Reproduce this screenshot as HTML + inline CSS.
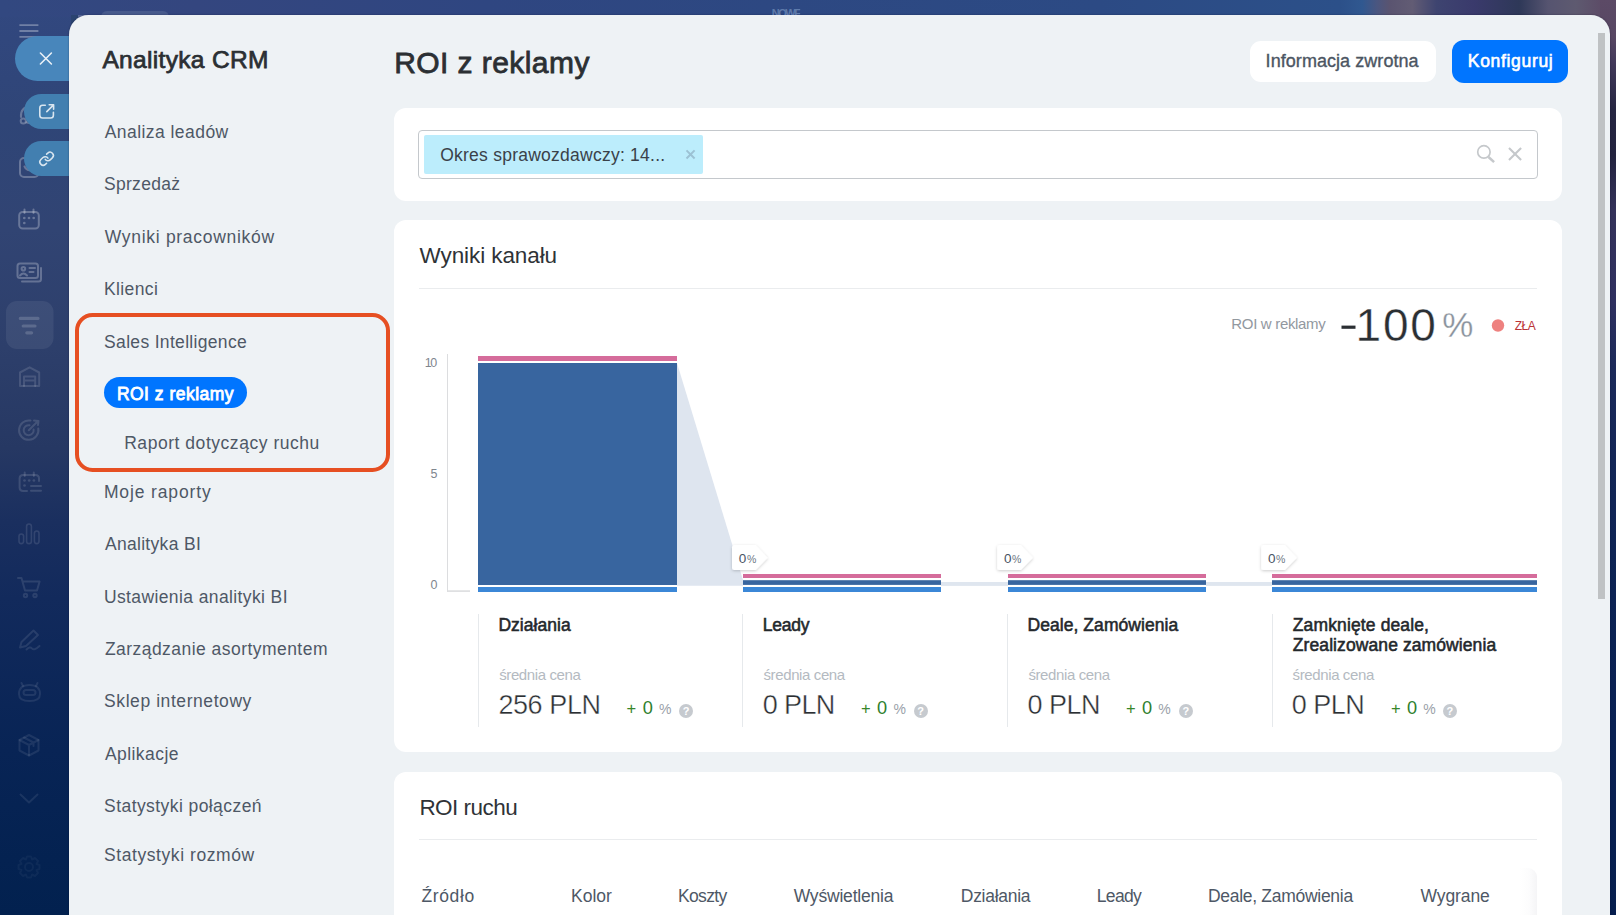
<!DOCTYPE html>
<html lang="pl">
<head>
<meta charset="utf-8">
<title>ROI z reklamy</title>
<style>
*{box-sizing:border-box;margin:0;padding:0}
html,body{width:1616px;height:915px;overflow:hidden}
body{font-family:"Liberation Sans",sans-serif;position:relative;
 background:linear-gradient(180deg,#324880 0%,#2f4577 13%,#314473 25%,#2d3f6b 38%,#263863 49%,#1a2f5f 57%,#122a5c 65.5%,#082455 82%,#02214f 100%);}
.abs{position:absolute}
.t{position:absolute;white-space:nowrap;line-height:1;font-family:"Liberation Sans",sans-serif}
/* top strip photo-like background */
#topbg{left:0;top:0;width:1616px;height:17px;
 background:linear-gradient(90deg,#324880 0%,#34467f 12%,#2f4681 30%,#2d4882 48%,#2c4a84 68%,#2c5089 82.9%,#305890 84.3%,#4a5680 85.2%,#5a5470 86%,#625c74 87.4%,#3e4470 88.9%,#3a3a6c 91.2%,#2e3858 94%,#565470 95.8%,#5e5a70 97.5%,#5c4a66 99.3%,#5c4a66 100%);}
#rightbg{left:1600px;top:0;width:16px;height:915px;
 background:linear-gradient(180deg,#5c4a66 0%,#584763 4%,#42395a 7%,#262642 12%,#23233f 17%,#34325a 23%,#2f3060 33%,#1c2a5a 40%,#132657 50%,#0c2354 65%,#092053 80%,#061e4e 100%);}
#panel{left:69px;top:14.9px;width:1540.8px;height:920px;background:#eef2f5;border-radius:19.5px 19px 0 0;box-shadow:0 0 2px rgba(0,0,30,.4)}
#corner{left:71px;top:14.8px;width:7px;height:9px;background:#2b4470}
#corner2{left:78px;top:14.8px;width:9px;height:5px;background:#5a6a9a}
#tab{left:100.5px;top:10.8px;width:68.3px;height:10px;border-radius:6px 6px 0 0;background:#475a8c}
.pill{background:#4886bb;border-radius:23px 0 0 23px}
.card{background:#fff;border-radius:12px}
.hr{height:1px;background:#eaecee}
.vr{width:1px;background:#e6e9ec}
.q{width:14.4px;height:14.4px;border-radius:50%;background:#c6cacf;color:#fff;font-size:11px;font-weight:700;line-height:14.8px;text-align:center}
</style>
</head>
<body>
<div class="abs" id="topbg"></div>
<div class="abs" id="rightbg"></div>
<div class="abs" id="tab"></div>
<div class="abs" id="corner"></div>
<div class="abs" id="corner2"></div>

<!-- sidebar icons -->
<svg class="abs" style="left:0;top:0" width="69" height="915" viewBox="0 0 69 915" fill="none" stroke-linecap="round" stroke-linejoin="round">
<g stroke="#fff" stroke-opacity=".31" stroke-width="1.8" stroke-linecap="butt"><path d="M19.4 25.1H38.4M19.4 31H38.4M19.4 36.9H38.4"/></g>
<g stroke="#fff" stroke-opacity=".27" stroke-width="2"><circle cx="23.3" cy="121" r="2.6"/><path d="M21 117C20.5 111 24 107 30 106"/><path d="M26.3 122.3Q28.5 123.2 31 122.8"/></g>
<g stroke="#fff" stroke-opacity=".27" stroke-width="2"><rect x="20" y="158" width="18.5" height="19" rx="4"/><path d="M24.5 166.5Q26 169.8 30 170.3"/></g>
<g stroke="#fff" stroke-opacity=".27" stroke-width="2"><rect x="19.2" y="212" width="19.6" height="16.5" rx="3.5"/><path d="M24.5 209.5V213M33.5 209.5V213"/></g>
<g fill="#fff" fill-opacity=".27" stroke="none"><circle cx="24.3" cy="218" r="1.35"/><circle cx="29" cy="218" r="1.35"/><circle cx="33.7" cy="218" r="1.35"/><circle cx="24.3" cy="223" r="1.35"/></g>
<g stroke="#fff" stroke-opacity=".26" stroke-width="2"><rect x="17.5" y="263.5" width="20.5" height="14.5" rx="2.5"/><path d="M41 268V279Q41 281.5 38.5 281.5H22"/><circle cx="23.4" cy="268.7" r="1.8"/><path d="M20 275.5Q23.4 271.5 27 275.5"/><path d="M29.5 268H35M29.5 272H33.5"/></g>
<rect x="6" y="301" width="47.5" height="48" rx="11" fill="#fff" fill-opacity=".07" stroke="none"/>
<g stroke="#fff" stroke-opacity=".17" stroke-width="3.2"><path d="M20.3 318.4H38M23.2 326H35M26.8 332.8H31.6"/></g>
<g stroke="#fff" stroke-opacity=".135" stroke-width="2"><path d="M20 386V372.5L29.6 367.3L39.2 372.5V386Z"/><path d="M24 386V376.5H35.2V386M24 380.5H35.2"/></g>
<g stroke="#fff" stroke-opacity=".135" stroke-width="2"><path d="M38.3 428.5A9.7 9.7 0 1 1 30.5 420.6"/><path d="M33.6 429.5A5 5 0 1 1 29.5 425.3"/><path d="M28.8 430.2L36.5 422.5M34 420.5L38.5 421L38 425"/></g>
<g stroke="#fff" stroke-opacity=".135" stroke-width="2"><path d="M27 491H23Q19.6 491 19.6 487.6V478.5Q19.6 475 23 475H35.5Q39 475 39 478.5V481"/><path d="M24.7 472.5V476M33.8 472.5V476"/><path d="M31 486H41M31 490.8H41"/></g>
<g fill="#fff" fill-opacity=".135" stroke="none"><circle cx="24.5" cy="480.5" r="1.35"/><circle cx="29.2" cy="480.5" r="1.35"/><circle cx="33.9" cy="480.5" r="1.35"/><circle cx="24.5" cy="485.5" r="1.35"/></g>
<g stroke="#fff" stroke-opacity=".115" stroke-width="1.6"><rect x="19" y="534" width="4.6" height="9.6" rx="2.3"/><rect x="26.6" y="524" width="4.8" height="19.6" rx="2.4"/><rect x="34.4" y="531" width="4.6" height="12.6" rx="2.3"/></g>
<g stroke="#fff" stroke-opacity=".11" stroke-width="2"><path d="M18 578H21.5L25 590.5H37L39.6 581.5H23"/><circle cx="25.5" cy="595.5" r="1.7"/><circle cx="35" cy="595.5" r="1.7"/></g>
<g stroke="#fff" stroke-opacity=".10" stroke-width="2"><path d="M20 647.5L21.5 642L33.5 630.5L38 635L26 646Z"/><path d="M26.5 649.5Q30 646 32 648.5T39.5 646"/></g>
<g stroke="#fff" stroke-opacity=".09" stroke-width="2"><path d="M19 694Q19 685 29.5 685T40 694Q40 701 29.5 701T19 694Z"/><rect x="23.5" y="690" width="12" height="5" rx="2.5"/><path d="M23 686L21.5 683M36 686L37.5 683"/></g>
<g stroke="#fff" stroke-opacity=".085" stroke-width="2"><path d="M29 735L38.5 740V750.5L29 755.5L19.5 750.5V740Z"/><path d="M19.5 740L29 745L38.5 740M29 745V755.5M24 737.5L33.5 742.5V746"/></g>
<g stroke="#fff" stroke-opacity=".085" stroke-width="2"><path d="M20.5 794.5L29 802.5L37.5 794.5"/></g>
<g stroke="#fff" stroke-opacity=".045" stroke-width="2"><circle cx="29" cy="867" r="4"/><path d="M27 856.5H31L32 859.5L35 858L38 861L36.5 864L39.5 865V869L36.5 870L38 873L35 876L32 874.5L31 877.5H27L26 874.5L23 876L20 873L21.5 870L18.5 869V865L21.5 864L20 861L23 858L26 859.5Z"/></g>
</svg>

<!-- slider labels -->
<div class="abs pill" style="left:15.4px;top:36px;width:60px;height:44.7px"></div>
<div class="abs pill" style="left:24.4px;top:94px;width:50px;height:34.8px;border-radius:17.4px 0 0 17.4px;background:#427fb0"></div>
<div class="abs pill" style="left:24.4px;top:141px;width:50px;height:34.6px;border-radius:17.3px 0 0 17.3px;background:#427fb0"></div>
<svg class="abs" style="left:0;top:0" width="69" height="200" viewBox="0 0 69 200" fill="none" stroke="#fff" stroke-linecap="round" stroke-linejoin="round">
<path d="M40.4 53L51.4 64M51.4 53L40.4 64" stroke-width="1.6" stroke-opacity=".88"/>
<g stroke-width="1.6" stroke-opacity=".8"><path d="M45.3 105.3H42.6Q39.8 105.3 39.8 108.1V115.2Q39.8 118 42.6 118H50.6Q53.4 118 53.4 115.2V112.2"/><path d="M46.8 111.6L53.3 105.1M49.2 104.8H53.6V109.2"/></g>
<g stroke-width="2.3" stroke-opacity=".8" transform="translate(46.6 158.7) rotate(2) scale(.665) translate(-12 -12)"><path d="M10 13a5 5 0 0 0 7.54.54l3-3a5 5 0 0 0-7.07-7.07l-1.72 1.71"/><path d="M14 11a5 5 0 0 0-7.54-.54l-3 3a5 5 0 0 0 7.07 7.07l1.71-1.71"/></g>
</svg>

<div class="abs" id="panel"></div>

<!-- left menu -->
<div class="abs" style="left:74.9px;top:312.9px;width:315px;height:159.2px;border:4.5px solid #e64f22;border-radius:17.5px"></div>
<div class="abs" style="left:104px;top:377px;width:143px;height:31px;border-radius:16px;background:#0075ff"></div>

<!-- header buttons -->
<div class="abs" style="left:1250px;top:41px;width:186px;height:41px;border-radius:11px;background:#fff"></div>
<div class="abs" style="left:1452px;top:40px;width:116px;height:43px;border-radius:12px;background:#0075ff"></div>

<!-- scrollbar -->
<div class="abs" style="left:1598px;top:33px;width:7px;height:565.8px;background:#bfc2c4"></div>

<!-- filter card -->
<div class="abs card" style="left:394px;top:108px;width:1168px;height:93px"></div>
<div class="abs" style="left:418px;top:130px;width:1120px;height:49px;border:1px solid #c4c8cc;border-radius:4px;background:#fff"></div>
<div class="abs" style="left:424px;top:135px;width:279px;height:38.5px;border-radius:2px;background:#bcedfc"></div>
<svg class="abs" style="left:680px;top:144px" width="22" height="22" viewBox="0 0 22 22" fill="none" stroke="#9cc2d4" stroke-width="2" stroke-linecap="butt"><path d="M6.5 6.4l8.1 8.1M14.6 6.4l-8.1 8.1"/></svg>
<svg class="abs" style="left:1470px;top:140px" width="60" height="30" viewBox="0 0 60 30" fill="none" stroke="#c5c8cb" stroke-linecap="butt"><circle cx="13.9" cy="11.9" r="6.2" stroke-width="1.7"/><path d="M18.5 17L24.1 22.1" stroke-width="2.5"/><path d="M39 8l12.1 12.1M51.1 8l-12.1 12.1" stroke-width="2.1"/></svg>

<!-- chart card -->
<div class="abs card" style="left:394px;top:220px;width:1168px;height:532px"></div>
<div class="abs hr" style="left:419px;top:288px;width:1118px"></div>
<svg class="abs" style="left:394px;top:220px" width="1168" height="532" viewBox="394 220 1168 532" shape-rendering="auto">
<rect x="447" y="354" width="1" height="237.8" fill="#dcdddf"/><rect x="447" y="590.3" width="23" height="1.6" fill="#dcdddf"/>
<path d="M677 363L743 580V585.8H677Z" fill="#dee5ef"/>
<rect x="941" y="582" width="67" height="3.9" fill="#dfe6ef"/>
<rect x="1206" y="582" width="66" height="3.9" fill="#dfe6ef"/>
<rect x="478" y="356" width="199" height="5" fill="#d56c9b"/>
<rect x="478" y="363" width="199" height="222" fill="#38659f"/>
<rect x="478" y="587" width="199" height="5" fill="#3b87d7"/>
<rect x="743" y="574" width="198" height="4" fill="#d56c9b"/>
<rect x="743" y="580.2" width="198" height="4.7" fill="#38659f"/>
<rect x="743" y="587" width="198" height="5" fill="#3b87d7"/>
<rect x="1008" y="574" width="198" height="4" fill="#d56c9b"/>
<rect x="1008" y="580.2" width="198" height="4.7" fill="#38659f"/>
<rect x="1008" y="587" width="198" height="5" fill="#3b87d7"/>
<rect x="1272" y="574" width="265" height="4" fill="#d56c9b"/>
<rect x="1272" y="580.2" width="265" height="4.7" fill="#38659f"/>
<rect x="1272" y="587" width="265" height="5" fill="#3b87d7"/>
<defs><filter id="sh" x="-30%" y="-30%" width="160%" height="170%"><feDropShadow dx="0" dy="1" stdDeviation="1.6" flood-color="#000" flood-opacity=".2"/></filter></defs>
<path d="M734.5 545H755.6L767.7 557.8L755.6 570H734.5Q732 570 732 567.5V547.5Q732 545 734.5 545Z" fill="#fff" filter="url(#sh)"/>
<path d="M999.7 545H1020.8000000000001L1032.9 557.8L1020.8000000000001 570H999.7Q997.2 570 997.2 567.5V547.5Q997.2 545 999.7 545Z" fill="#fff" filter="url(#sh)"/>
<path d="M1263.7 545H1284.8L1296.9 557.8L1284.8 570H1263.7Q1261.2 570 1261.2 567.5V547.5Q1261.2 545 1263.7 545Z" fill="#fff" filter="url(#sh)"/>
<rect x="1341.5" y="325.6" width="14" height="3.2" fill="#2b2f33"/>
<circle cx="1498" cy="325.5" r="6.2" fill="#ee817f"/>
</svg>
<div class="abs vr" style="left:478px;top:614px;height:113px"></div>
<div class="abs vr" style="left:742px;top:614px;height:113px"></div>
<div class="abs vr" style="left:1007px;top:614px;height:113px"></div>
<div class="abs vr" style="left:1272px;top:614px;height:113px"></div>
<div class="abs q" style="left:678.8px;top:703.6px">?</div>
<div class="abs q" style="left:913.5px;top:703.6px">?</div>
<div class="abs q" style="left:1178.7px;top:703.6px">?</div>
<div class="abs q" style="left:1442.6px;top:703.6px">?</div>

<!-- second card -->
<div class="abs card" style="left:394px;top:772px;width:1168px;height:200px"></div>
<div class="abs hr" style="left:419px;top:838.5px;width:1118px"></div>
<div class="abs" style="left:1519px;top:868px;width:18px;height:47px;background:linear-gradient(90deg,rgba(235,235,238,0) 0%,rgba(232,232,236,.12) 55%,rgba(225,225,230,.34) 100%);border-radius:0 9px 0 0"></div>

<span class="t" style="left:102.40px;top:48.00px;font-size:24.5px;color:#2b2f33;letter-spacing:0.333px;-webkit-text-stroke:0.75px #2b2f33;">Analityka CRM</span>
<span class="t" style="left:104.70px;top:124.00px;font-size:17.5px;color:#4e5866;letter-spacing:0.448px;">Analiza leadów</span>
<span class="t" style="left:104.00px;top:176.00px;font-size:17.5px;color:#4e5866;letter-spacing:0.288px;">Sprzedaż</span>
<span class="t" style="left:104.70px;top:229.00px;font-size:17.5px;color:#4e5866;letter-spacing:0.709px;">Wyniki pracowników</span>
<span class="t" style="left:103.90px;top:281.00px;font-size:17.5px;color:#4e5866;letter-spacing:0.406px;">Klienci</span>
<span class="t" style="left:104.10px;top:334.00px;font-size:17.5px;color:#4e5866;letter-spacing:0.321px;">Sales Intelligence</span>
<span class="t" style="left:116.90px;top:385.50px;font-size:17.5px;color:#ffffff;letter-spacing:0.484px;-webkit-text-stroke:0.8px #fff;">ROI z reklamy</span>
<span class="t" style="left:124.20px;top:435.00px;font-size:17.5px;color:#4e5866;letter-spacing:0.538px;">Raport dotyczący ruchu</span>
<span class="t" style="left:103.90px;top:484.00px;font-size:17.5px;color:#4e5866;letter-spacing:0.872px;">Moje raporty</span>
<span class="t" style="left:104.90px;top:536.00px;font-size:17.5px;color:#4e5866;letter-spacing:0.314px;">Analityka BI</span>
<span class="t" style="left:103.90px;top:589.00px;font-size:17.5px;color:#4e5866;letter-spacing:0.390px;">Ustawienia analityki BI</span>
<span class="t" style="left:104.90px;top:641.00px;font-size:17.5px;color:#4e5866;letter-spacing:0.458px;">Zarządzanie asortymentem</span>
<span class="t" style="left:104.10px;top:693.00px;font-size:17.5px;color:#4e5866;letter-spacing:0.570px;">Sklep internetowy</span>
<span class="t" style="left:104.90px;top:746.00px;font-size:17.5px;color:#4e5866;letter-spacing:0.450px;">Aplikacje</span>
<span class="t" style="left:104.10px;top:798.00px;font-size:17.5px;color:#4e5866;letter-spacing:0.424px;">Statystyki połączeń</span>
<span class="t" style="left:104.10px;top:847.00px;font-size:17.5px;color:#4e5866;letter-spacing:0.565px;">Statystyki rozmów</span>
<span class="t" style="left:394.20px;top:48.40px;font-size:30px;color:#2b2f33;letter-spacing:0.432px;-webkit-text-stroke:0.8px #2b2f33;">ROI z reklamy</span>
<span class="t" style="left:1265.60px;top:52.00px;font-size:18px;color:#4b5562;letter-spacing:0.056px;-webkit-text-stroke:0.35px #4b5562;">Informacja zwrotna</span>
<span class="t" style="left:1467.80px;top:52.80px;font-size:17.5px;color:#ffffff;letter-spacing:0.676px;-webkit-text-stroke:0.6px #fff;">Konfiguruj</span>
<span class="t" style="left:440.20px;top:147.20px;font-size:17.5px;color:#3a4149;letter-spacing:0.245px;">Okres sprawozdawczy: 14...</span>
<span class="t" style="left:419.60px;top:244.90px;font-size:22.5px;color:#2f3337;letter-spacing:-0.091px;">Wyniki kanału</span>
<span class="t" style="left:1231.30px;top:316.10px;font-size:15px;color:#92989f;letter-spacing:-0.320px;">ROI w reklamy</span>
<span class="t" style="left:1355.60px;top:301.70px;font-size:46px;color:#2b2f33;letter-spacing:1.717px;-webkit-text-stroke:0.35px #fff;">100</span>
<span class="t" style="left:1442.20px;top:307.00px;font-size:35px;color:#8a929c;letter-spacing:0.000px;-webkit-text-stroke:0.3px #fff;">%</span>
<span class="t" style="left:1514.80px;top:319.80px;font-size:12px;color:#bb3336;letter-spacing:-0.502px;">ZŁA</span>
<span class="t" style="left:424.80px;top:356.90px;font-size:12.5px;color:#7f868e;letter-spacing:-1.452px;">10</span>
<span class="t" style="left:430.60px;top:468.10px;font-size:12.5px;color:#7f868e;letter-spacing:0.000px;">5</span>
<span class="t" style="left:430.60px;top:579.00px;font-size:12.5px;color:#7f868e;letter-spacing:0.000px;">0</span>
<span class="t" style="left:498.40px;top:617.00px;font-size:17.5px;color:#24282c;letter-spacing:0.044px;-webkit-text-stroke:0.55px #24282c;">Działania</span>
<span class="t" style="left:762.70px;top:617.00px;font-size:17.5px;color:#24282c;letter-spacing:-0.208px;-webkit-text-stroke:0.55px #24282c;">Leady</span>
<span class="t" style="left:1027.60px;top:617.00px;font-size:17.5px;color:#24282c;letter-spacing:0.046px;-webkit-text-stroke:0.55px #24282c;">Deale, Zamówienia</span>
<span class="t" style="left:1292.80px;top:617.00px;font-size:17.5px;color:#24282c;letter-spacing:0.128px;-webkit-text-stroke:0.55px #24282c;">Zamknięte deale,</span>
<span class="t" style="left:1292.80px;top:637.00px;font-size:17.5px;color:#24282c;letter-spacing:0.090px;-webkit-text-stroke:0.55px #24282c;">Zrealizowane zamówienia</span>
<span class="t" style="left:499.20px;top:667.00px;font-size:15px;color:#b4bac1;letter-spacing:-0.386px;">średnia cena</span>
<span class="t" style="left:498.40px;top:691.80px;font-size:27px;color:#2b2f33;letter-spacing:-0.412px;-webkit-text-stroke:0.4px #fff;">256 PLN</span>
<span class="t" style="left:626.60px;top:699.60px;font-size:16.5px;color:#37862a;letter-spacing:0.000px;">+</span>
<span class="t" style="left:642.80px;top:698.90px;font-size:18.2px;color:#2f7f2e;letter-spacing:0.000px;">0</span>
<span class="t" style="left:659.00px;top:701.60px;font-size:14px;color:#9aa1a9;letter-spacing:0.000px;">%</span>
<span class="t" style="left:763.50px;top:667.00px;font-size:15px;color:#b4bac1;letter-spacing:-0.386px;">średnia cena</span>
<span class="t" style="left:762.70px;top:691.80px;font-size:27px;color:#2b2f33;letter-spacing:-0.611px;-webkit-text-stroke:0.4px #fff;">0 PLN</span>
<span class="t" style="left:860.90px;top:699.60px;font-size:16.5px;color:#37862a;letter-spacing:0.000px;">+</span>
<span class="t" style="left:877.10px;top:698.90px;font-size:18.2px;color:#2f7f2e;letter-spacing:0.000px;">0</span>
<span class="t" style="left:893.40px;top:701.60px;font-size:14px;color:#9aa1a9;letter-spacing:0.000px;">%</span>
<span class="t" style="left:1028.40px;top:667.00px;font-size:15px;color:#b4bac1;letter-spacing:-0.386px;">średnia cena</span>
<span class="t" style="left:1027.60px;top:691.80px;font-size:27px;color:#2b2f33;letter-spacing:-0.511px;-webkit-text-stroke:0.4px #fff;">0 PLN</span>
<span class="t" style="left:1125.90px;top:699.60px;font-size:16.5px;color:#37862a;letter-spacing:0.000px;">+</span>
<span class="t" style="left:1142.10px;top:698.90px;font-size:18.2px;color:#2f7f2e;letter-spacing:0.000px;">0</span>
<span class="t" style="left:1158.20px;top:701.60px;font-size:14px;color:#9aa1a9;letter-spacing:0.000px;">%</span>
<span class="t" style="left:1292.60px;top:667.00px;font-size:15px;color:#b4bac1;letter-spacing:-0.386px;">średnia cena</span>
<span class="t" style="left:1291.80px;top:691.80px;font-size:27px;color:#2b2f33;letter-spacing:-0.511px;-webkit-text-stroke:0.4px #fff;">0 PLN</span>
<span class="t" style="left:1390.90px;top:699.60px;font-size:16.5px;color:#37862a;letter-spacing:0.000px;">+</span>
<span class="t" style="left:1407.10px;top:698.90px;font-size:18.2px;color:#2f7f2e;letter-spacing:0.000px;">0</span>
<span class="t" style="left:1423.20px;top:701.60px;font-size:14px;color:#9aa1a9;letter-spacing:0.000px;">%</span>
<span class="t" style="left:419.40px;top:796.80px;font-size:22.5px;color:#2f3337;letter-spacing:-0.528px;">ROI ruchu</span>
<span class="t" style="left:421.40px;top:887.50px;font-size:17.5px;color:#4e5866;letter-spacing:0.646px;">Źródło</span>
<span class="t" style="left:571.00px;top:887.50px;font-size:17.5px;color:#4e5866;letter-spacing:-0.006px;">Kolor</span>
<span class="t" style="left:678.10px;top:887.50px;font-size:17.5px;color:#4e5866;letter-spacing:-0.693px;">Koszty</span>
<span class="t" style="left:793.70px;top:887.50px;font-size:17.5px;color:#4e5866;letter-spacing:-0.193px;">Wyświetlenia</span>
<span class="t" style="left:960.80px;top:887.50px;font-size:17.5px;color:#4e5866;letter-spacing:-0.281px;">Działania</span>
<span class="t" style="left:1096.80px;top:887.50px;font-size:17.5px;color:#4e5866;letter-spacing:-0.683px;">Leady</span>
<span class="t" style="left:1207.90px;top:887.50px;font-size:17.5px;color:#4e5866;letter-spacing:-0.285px;">Deale, Zamówienia</span>
<span class="t" style="left:1420.50px;top:887.50px;font-size:17.5px;color:#4e5866;letter-spacing:-0.090px;">Wygrane</span>
<span class="t" style="left:738.70px;top:551.90px;font-size:13.5px;color:#4a5565;letter-spacing:0.000px;">0</span>
<span class="t" style="left:746.90px;top:553.90px;font-size:10.5px;color:#6d7784;letter-spacing:0.000px;">%</span>
<span class="t" style="left:1003.90px;top:551.90px;font-size:13.5px;color:#4a5565;letter-spacing:0.000px;">0</span>
<span class="t" style="left:1012.10px;top:553.90px;font-size:10.5px;color:#6d7784;letter-spacing:0.000px;">%</span>
<span class="t" style="left:1267.90px;top:551.90px;font-size:13.5px;color:#4a5565;letter-spacing:0.000px;">0</span>
<span class="t" style="left:1276.10px;top:553.90px;font-size:10.5px;color:#6d7784;letter-spacing:0.000px;">%</span>
<span class="t" style="left:771.70px;top:8.30px;font-size:11px;color:#5f7bab;letter-spacing:-1.427px;font-weight:700;z-index:1;clip-path:inset(0 0 4.3px 0);">NOWE</span>
</body>
</html>
